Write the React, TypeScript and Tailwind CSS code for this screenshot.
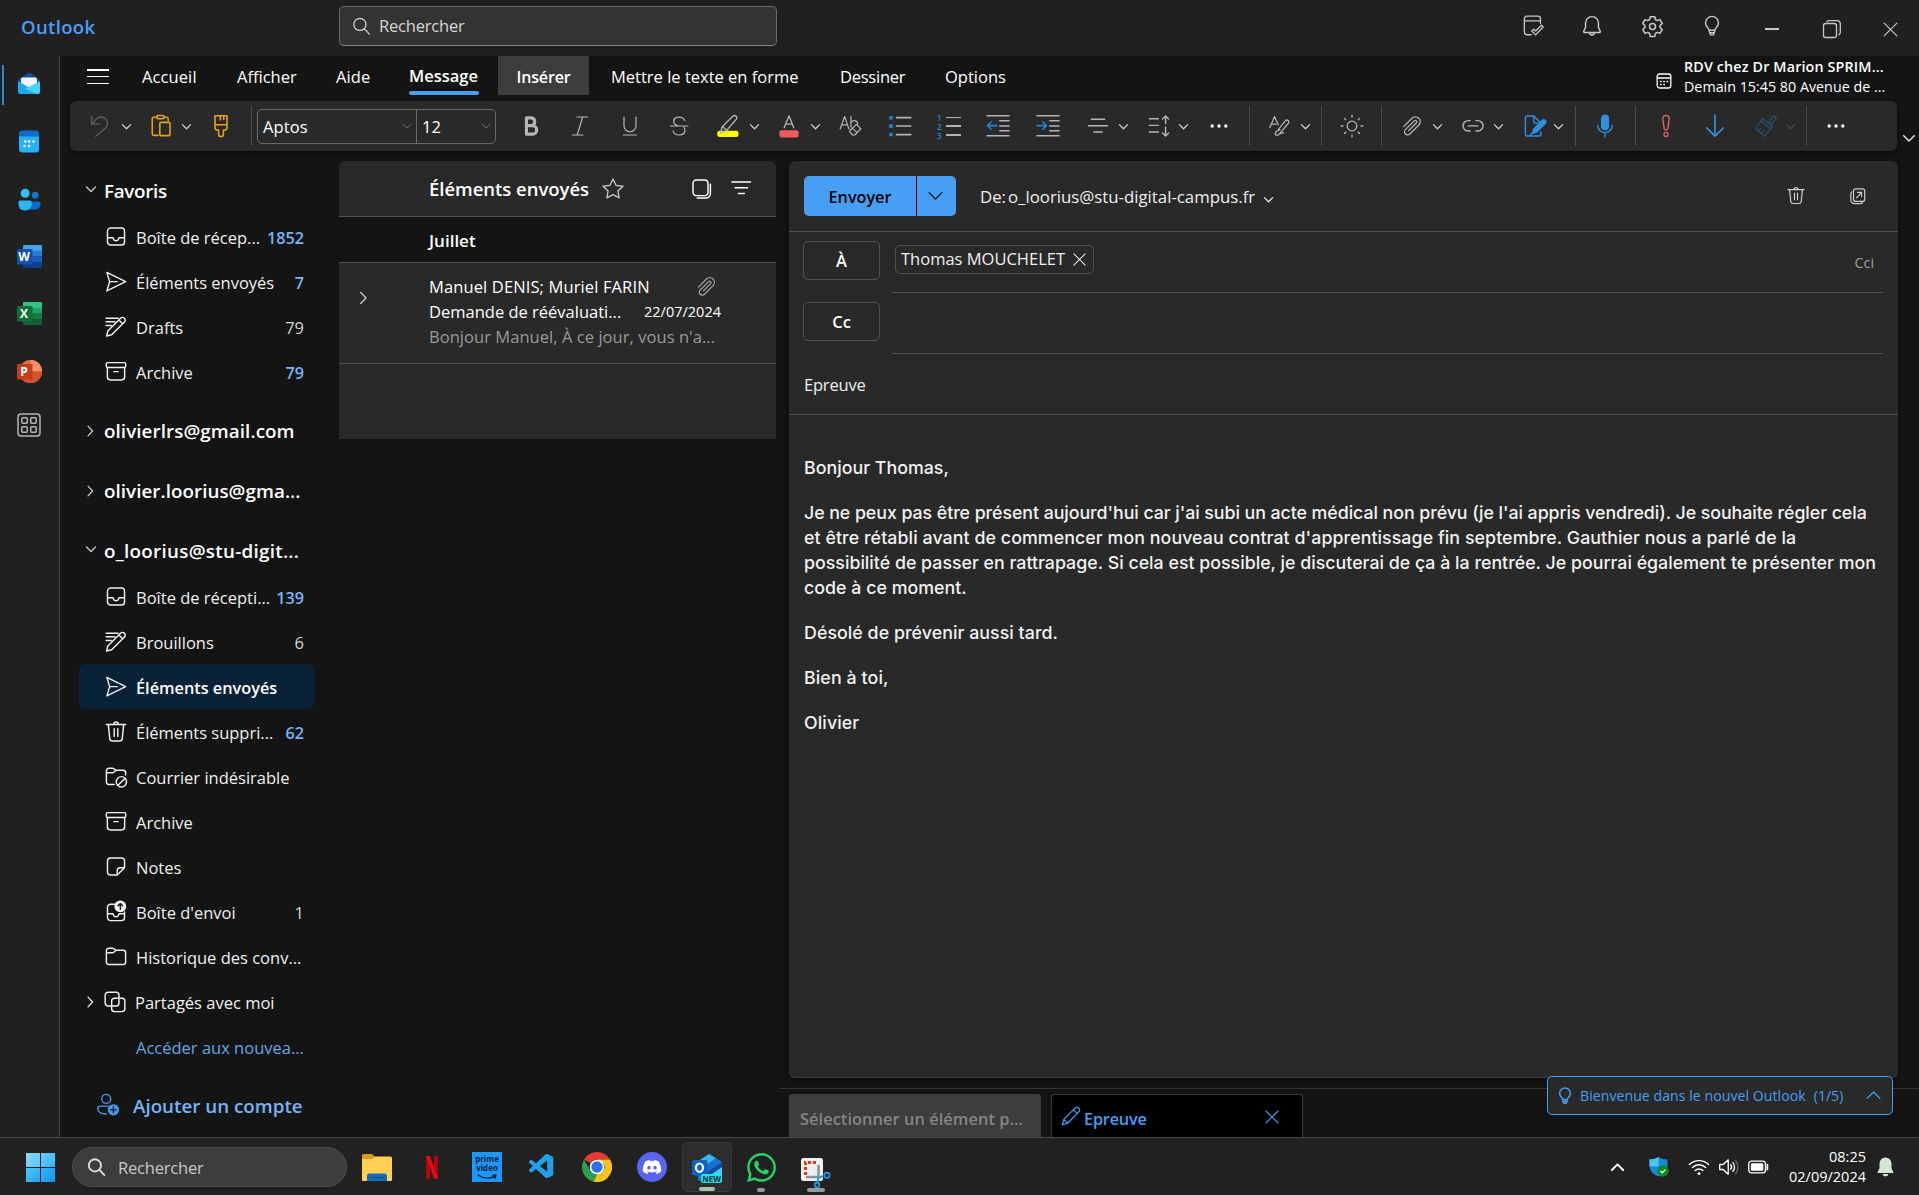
import type { ReactNode } from "react";
import { FaDiscord, FaWhatsapp } from "react-icons/fa";
import { VscVscode } from "react-icons/vsc";

type IconProps = { className?: string; children: ReactNode; box?: string; sw?: number };

function Icon({ className = "size-6", children, box = "0 0 20 20", sw = 1 }: IconProps) {
  return (
    <svg viewBox={box} fill="none" stroke="currentColor" strokeWidth={sw} strokeLinecap="round" strokeLinejoin="round" className={`shrink-0 ${className}`}>
      {children}
    </svg>
  );
}

const ChevDown = ({ className = "size-3", sw = 1.3 }: { className?: string; sw?: number }) => (
  <Icon box="0 0 12 12" sw={sw} className={className}><path d="M1.5 4 6 8.5 10.5 4" /></Icon>
);
const ChevRight = ({ className = "size-3" }: { className?: string }) => (
  <Icon box="0 0 12 12" sw={1.2} className={className}><path d="M4 1.2 8.6 6 4 10.8" /></Icon>
);
const ChevUp = ({ className = "size-3", sw = 1.2 }: { className?: string; sw?: number }) => (
  <Icon box="0 0 12 12" sw={sw} className={className}><path d="M1.5 8 6 3.5 10.5 8" /></Icon>
);
const Close = ({ className = "size-4" }: { className?: string }) => (
  <Icon box="0 0 16 16" sw={1.1} className={className}><path d="M2 2 14 14M14 2 2 14" /></Icon>
);
const SearchIcon = ({ className, sw = 1.2 }: { className?: string; sw?: number }) => (
  <Icon className={className} sw={sw}><circle cx="8.5" cy="8" r="5.8" /><path d="m12.8 12.3 4.7 5" /></Icon>
);
const Bulb = ({ className = "size-6", sw = 1.2 }: { className?: string; sw?: number }) => (
  <Icon className={className} sw={sw}>
    <path d="M10 2a5.4 5.4 0 0 0-5.4 5.3c0 1.9.9 3.300 2.300 4.700.4.4.5.8.6 1.200l.7 3c.2.9.7 1.400 1.500 1.400h.6c.8 0 1.300-.5 1.500-1.400l.7-3c.1-.4.2-.8.6-1.200 1.400-1.400 2.300-2.800 2.300-4.700A5.400 5.400 0 0 0 10 2ZM7.600 13.600h4.800M8 15.600h4" />
  </Icon>
);
const Inbox = () => (
  <Icon className="size-6" sw={1.2}><rect x="2.9" y="2.5" width="14.200" height="14.200" rx="2.600" /><path d="M3 10.600h4.200c.4 0 .5.3.6.7.2 1 1 1.800 2.200 1.800s2-.8 2.200-1.800c.1-.4.2-.7.6-.7H17" /></Icon>
);
const Send = () => (
  <Icon className="size-6" sw={1.200}><path d="M2.400 2 18 9.700 2.400 17.400 4.700 9.700ZM4.700 9.700H11" /></Icon>
);
const Drafts = () => (
  <Icon className="size-6" sw={1.200}><path d="M1.800 2.700h10M1.800 5.700h7.200M1.800 8.700H6M2.200 17.500l1-4.200L13.800 2.700a2.200 2.200 0 0 1 3.200 3.200L6.400 16.500ZM12.400 4.100l3.200 3.200" /></Icon>
);
const Archive = () => (
  <Icon className="size-6" sw={1.200}><rect x="1.900" y="2.200" width="16.200" height="4" rx="1.100" /><path d="M2.800 6.400v7.600a2.600 2.600 0 0 0 2.600 2.600h9.200a2.600 2.600 0 0 0 2.600-2.600V6.400M8.200 9.700h3.600" /></Icon>
);
const Trash = ({ className = "size-6" }: { className?: string }) => (
  <Icon className={className} sw={1.200}><path d="M2 3.700h16M8 3.700a2 2 0 0 1 4 0M3.600 3.900l1.200 11.600a2.200 2.200 0 0 0 2.200 2h6a2.200 2.200 0 0 0 2.200-2L16.400 3.900M8.500 7.200v6.500M11.500 7.200v6.500" /></Icon>
);
const folderTop = "M2 6.500h5.200c.5 0 .8-.2 1.200-.600L10 4.300M2 4.700a2 2 0 0 1 2-2h3c.5 0 1 .2 1.300.500L9.800 4.300H16a2 2 0 0 1 2 2";
const Folder = () => (
  <Icon className="size-6" sw={1.200}><path d={folderTop} /><path d="M2 4.700v9.500a2 2 0 0 0 2 2h12a2 2 0 0 0 2-2v-8" /></Icon>
);
const Junk = () => (
  <Icon className="size-6" sw={1.200}><path d={folderTop} /><path d="M2 4.700v9.500a2 2 0 0 0 2 2h4.500M18 6.300v2" /><circle cx="14.500" cy="14" r="4.300" /><path d="m11.700 16.800 5.700-5.600" /></Icon>
);
const Note = () => (
  <Icon className="size-6" sw={1.200}><path d="M17.100 10.600V5.100a2.600 2.600 0 0 0-2.600-2.600h-9a2.600 2.600 0 0 0-2.600 2.600v9a2.600 2.600 0 0 0 2.600 2.600H11ZM11 16.600v-3.500A2.500 2.500 0 0 1 13.500 10.600H17" /></Icon>
);
const Outbox = () => (
  <Icon className="size-6" sw={1.200}>
    <path d="M9.500 3.500h-4a2.600 2.600 0 0 0-2.600 2.600v8.500a2.600 2.600 0 0 0 2.600 2.600h9a2.600 2.600 0 0 0 2.600-2.600V10M3 11.500h4.200c.4 0 .5.3.6.7.2 1 1 1.800 2.200 1.800s2-.8 2.200-1.800c.1-.4.2-.7.6-.7H17" />
    <circle cx="13.600" cy="5.300" r="4.900" fill="#fff" stroke="none" /><path d="M13.600 7.800V3M11.700 4.800l1.900-1.900 1.900 1.900" stroke="#141414" />
  </Icon>
);
const Shared = () => (
  <Icon className="size-6" sw={1.200}><rect x="1.800" y="1.800" width="11.500" height="11.500" rx="2.400" /><rect x="7.200" y="6.800" width="11" height="11.200" rx="2.400" /></Icon>
);
const Clip = ({ className = "size-6" }: { className?: string }) => (
  <Icon className={className} sw={1.050}><path d="m3 10.500 7-7a4 4 0 0 1 5.700 5.700l-7.500 7.500a2.600 2.600 0 0 1-3.700-3.700l7.300-7.300a1.200 1.200 0 0 1 1.800 1.800L7.300 13.800" /></Icon>
);
const Dots = () => (
  <svg viewBox="0 0 18 4" className="h-1 w-[18px] shrink-0" fill="currentColor"><circle cx="2.200" cy="2" r="1.700" /><circle cx="9" cy="2" r="1.700" /><circle cx="15.800" cy="2" r="1.700" /></svg>
);
const Pencil = ({ className = "size-6" }: { className?: string }) => (
  <Icon className={className} sw={1.100}><path d="m2.200 17.800 1.200-4.700L13.700 2.900a2.400 2.400 0 0 1 3.400 3.400L6.900 16.600ZM12.200 4.400l3.400 3.400M3.400 13.100l3.500 3.500" /></Icon>
);

function Cell({ c, children }: { c: string; children: ReactNode }) {
  return <div className={`${c} flex h-full shrink-0 items-center justify-center`}>{children}</div>;
}
const Sep = ({ c }: { c: string }) => <div className={`${c} h-10 w-px shrink-0 bg-[#4a4a4a]`} />;

/* ---------- Title bar ---------- */
function TitleBar() {
  return (
    <header className="flex h-14 shrink-0 bg-[#202020] text-[#c8c8c8]">
      <div className="flex h-[53px] w-[339px] items-center pl-[21px] text-[18.500px] font-semibold tracking-[0.350px] text-[#479ef5]">Outlook</div>
      <div className="mt-1.5 flex h-10 w-[438px] items-center rounded-[5px] border border-[#6a6a6a] border-b-[#8a8a8a] bg-[#333] pl-[11px] tracking-[-0.200px] text-[#d6d6d6]">
        <SearchIcon className="size-[21px]" />
        <span className="ml-[7px] pt-px">Rechercher</span>
      </div>
      <div className="ml-auto flex">
        <div className="flex h-[52px] items-center">
          <Cell c="w-[58px]">
            <Icon className="size-6" sw={1.100}><path d="M8.500 17.300H5a2.200 2.200 0 0 1-2.200-2.200V4A2.200 2.200 0 0 1 5 1.800h9A2.200 2.200 0 0 1 16.200 4v4M2.800 5.800h13.400" /><path d="m9 14.200 1.600-1.600 1.600 1.600 4.800-4.900 1.500 1.500-6.300 6.600Z" /></Icon>
          </Cell>
          <Cell c="w-[60px]">
            <Icon className="size-6" sw={1.200}><path d="M10 2.200a5.400 5.400 0 0 0-5.400 5.400v3.600l-1.500 3.300c-.2.500.1.900.6.900h12.600c.5 0 .8-.4.6-.9l-1.500-3.300V7.600A5.400 5.400 0 0 0 10 2.200ZM8 15.500a2 2 0 0 0 4 0" /></Icon>
          </Cell>
          <Cell c="w-[60px]">
            <Icon className="size-[25px]" sw={1.200}><path d="M8.200 2.100h3.600l.5 2.300 1.500.9 2.200-.8 1.800 3.100-1.700 1.500v1.800l1.700 1.500-1.800 3.100-2.200-.8-1.500.9-.5 2.300H8.200l-.5-2.300-1.500-.9-2.200.8-1.800-3.100 1.700-1.500V9.100L2.200 7.600 4 4.500l2.200.8 1.500-.9Z" /><circle cx="10" cy="10" r="2.400" /></Icon>
          </Cell>
          <Cell c="w-[60px]"><Bulb /></Cell>
        </div>
        <div className="flex h-[58px] items-center">
          <Cell c="w-[60px]"><div className="h-0.5 w-3.5 bg-[#c8c8c8]" /></Cell>
          <Cell c="w-[60px]"><Icon className="size-5" sw={1.300}><rect x="1.500" y="4.500" width="13" height="14" rx="2.200" /><path d="M5 2.500Q5.800 1.600 7 1.600h8a3.300 3.300 0 0 1 3.300 3.300v8.400q0 1.500-1.300 2.500" /></Icon></Cell>
          <Cell c="w-[57px]"><Close className="size-[17px]" /></Cell>
        </div>
      </div>
    </header>
  );
}

/* ---------- App rail ---------- */
function OfficeTile({ letter, kind }: { letter: string; kind: "word" | "excel" | "ppt" }) {
  const c = {
    word: ["#41a5ee", "#2b7cd3", "#185abd", "#103f91", "#1150b0"],
    excel: ["#33c481", "#21a366", "#107c41", "#185c37", "#0f7038"],
    ppt: ["#ff8f6b", "#ed6c47", "#d35230", "#d35230", "#c43e1c"],
  }[kind];
  return (
    <div className="relative h-[23px] w-[25px]">
      <svg viewBox="0 0 25 23" className="size-full">
        {kind === "ppt" ? (
          <><circle cx="13.500" cy="11.500" r="11.500" fill={c[1]} /><path d="M13.500 0A11.500 11.500 0 0 1 25 11.500H13.500Z" fill={c[0]} /><path d="M2 11.500h23a11.500 11.500 0 0 1-23 0Z" fill={c[2]} /></>
        ) : (
          <><path d="M7 0h17a1 1 0 0 1 1 1v5H6V1a1 1 0 0 1 1-1Z" fill={c[0]} /><path d="M6 5.800h19v5.800H6Z" fill={c[1]} /><path d="M6 11.500h19v5.800H6Z" fill={c[2]} /><path d="M6 17.200h19V22a1 1 0 0 1-1 1H7a1 1 0 0 1-1-1Z" fill={c[3]} /></>
        )}
        <rect x="0" y="4" width="15.500" height="15.500" rx="1.300" fill={c[4]} />
      </svg>
      <span className="absolute top-1 left-0 flex size-[15px] items-center justify-center text-[12px] leading-none font-bold text-white">{letter}</span>
    </div>
  );
}

function Rail() {
  return (
    <nav className="flex w-[60px] shrink-0 flex-col items-center border-r border-[#414141] bg-[#202020] pr-px">
      <div className="relative flex h-[54px] w-full items-center justify-center">
        <div className="absolute top-[9px] left-0.5 h-10 w-0.5 bg-[#2f86d6]" />
        <svg viewBox="0 0 24 24" className="size-[24px]">
          <path d="M1 9 11 1.800q1-.7 2 0L23 9v6H1Z" fill="#0f4fa8" /><path d="M4 8q0-1.500 1.500-1.500h13Q20 6.500 20 8v8H4Z" fill="#f3f6fd" />
          <path d="M1 10.500 12 17 1 21Z" fill="#1783de" /><path d="M23 10.500 7 19l-5 3q1 1 2 1h16q3 0 3-3Z" fill="#3ccbf4" /><path d="m1 10 13 8 6 5H4q-3 0-3-3Z" fill="#22a9ec" /><path d="M23 10.500 8 18l12 5q3 0 3-3Z" fill="#45d5fa" />
        </svg>
      </div>
      <div className="flex h-[62px] items-center">
        <svg viewBox="0 0 20 23" className="h-[23px] w-5"><rect y="1" width="20" height="21.500" rx="3.500" fill="#29b0f5" /><path d="M0 6.500V4Q0 .500 3.500.500h13Q20 .500 20 4v2.500Z" fill="#0f6cce" /><g fill="#fff"><circle cx="6.300" cy="11.500" r="1.200" /><circle cx="10" cy="11.500" r="1.200" /><circle cx="14.500" cy="11.500" r="1.200" /><circle cx="5.500" cy="16" r="1.200" /><circle cx="10" cy="16" r="1.200" /></g></svg>
      </div>
      <div className="flex h-[54px] items-center">
        <svg viewBox="0 0 24 24" className="size-[23px]"><circle cx="18" cy="7.500" r="3.500" fill="#0f78d4" /><path d="M12 14h9.500q2 0 2 2.500 0 6-6 6H12Z" fill="#0f6cc8" /><circle cx="7.500" cy="5.500" r="4.700" fill="#35bdf8" /><path d="M2.500 13h9.500q2.500 0 2.500 2.500 0 8-7.200 8T.500 15.500Q.500 13 2.500 13Z" fill="#2bb6f6" /></svg>
      </div>
      <div className="flex h-[61px] items-center"><OfficeTile letter="W" kind="word" /></div>
      <div className="flex h-[53px] items-center"><OfficeTile letter="X" kind="excel" /></div>
      <div className="flex h-[63px] items-center"><OfficeTile letter="P" kind="ppt" /></div>
      <div className="mt-[10px] text-[#b5b5b5]">
        <Icon box="0 0 24 24" sw={1.500} className="size-6"><rect x="1" y="1" width="22" height="22" rx="3" /><rect x="4.800" y="4.800" width="5.500" height="5.500" rx="1" /><rect x="13.700" y="4.800" width="5.500" height="5.500" rx="1" /><rect x="4.800" y="13.700" width="5.500" height="5.500" rx="1" /><rect x="13.700" y="13.700" width="5.500" height="5.500" rx="1" /></Icon>
      </div>
    </nav>
  );
}

/* ---------- Menu and ribbon ---------- */
function MenuTabs() {
  return (
    <div className="flex h-[45px] text-white">
      <div className="flex h-[41px] items-center pl-[27px]">
        <div className="flex h-[15px] w-[22px] flex-col justify-between"><i className="h-[1.500px] bg-white" /><i className="h-[1.500px] bg-white" /><i className="h-[1.500px] bg-white" /></div>
      </div>
      <div className="flex h-10 items-center pt-0.5">
        <span className="ml-[33px] w-[95px] tracking-[0.100px]">Accueil</span>
        <span className="w-[99px]">Afficher</span>
        <span className="w-[73px] tracking-[0.100px]">Aide</span>
      </div>
      <div className="flex h-[39px] w-[89px] flex-col items-start justify-end text-[16.500px] font-semibold">
        <span className="pb-[3px] leading-6">Message</span>
        <i className="h-1 w-[70px] rounded-[2px] bg-[#479ef5]" />
      </div>
      <div className="flex h-[39px] w-[91px] items-center justify-center bg-[#3d3d3d] pt-0.5 text-[16px] font-semibold tracking-[-0.150px]">Insérer</div>
      <div className="flex h-10 items-center pt-0.5">
        <span className="ml-[22px] w-[229px]">Mettre le texte en forme</span>
        <span className="w-[105px] tracking-[-0.250px]">Dessiner</span>
        <span>Options</span>
      </div>
      <div className="ml-auto flex w-[263px] items-center text-[14.300px] leading-5">
        <Icon box="0 0 16 16" sw={1.300} className="mt-1 size-4"><rect x="1.200" y="1" width="13.600" height="14" rx="2.600" /><path d="M1.200 5h13.600M4.500 8.500h.6M7.800 8.500h.6M11 8.500h.6M4.500 11.500h.6M7.800 11.500h.6" /></Icon>
        <div className="ml-[12px] mb-2 pt-1 whitespace-nowrap">
          <p className="font-semibold tracking-[0.150px]">RDV chez Dr Marion SPRIM...</p>
          <p>Demain 15:45 80 Avenue de ...</p>
        </div>
      </div>
    </div>
  );
}

function Ribbon() {
  const chev = <ChevDown className="size-[11px] text-[#d0d0d0]" sw={1.400} />;
  return (
    <div className="flex h-[50px]">
      <div className="ml-2.5 flex w-[1827px] items-center rounded-md bg-[#292929] text-[#b5b5b5] shadow-[0_2px_4px_rgba(0,0,0,0.5)]">
        <Cell c="ml-4 w-7"><Icon className="size-6 text-[#5f5f5f]" sw={1.100}><path d="M3 2v6.500h6.500M3.200 8.300 7 4.200a5.400 5.400 0 0 1 8.500.8 6 6 0 0 1-.8 6.500L6.500 18.500" /></Icon></Cell>
        <Cell c="w-6">{chev}</Cell>
        <Cell c="ml-2 w-[30px]"><Icon className="size-6 text-[#e8a317]" sw={1.300}><path d="M7.500 17.800H4a1.300 1.300 0 0 1-1.300-1.300V4A1.300 1.300 0 0 1 4 2.700h2.500M12.500 2.700H15A1.300 1.300 0 0 1 16 4v1.500" /><rect x="6.500" y="1.300" width="6" height="2.700" rx="1" /><rect x="9" y="7" width="8.500" height="11" rx="1" /></Icon></Cell>
        <Cell c="w-5">{chev}</Cell>
        <Cell c="ml-[9px] w-[31px]"><Icon className="size-6 text-[#e8a317]" sw={1.300}><path d="M5 1.500h10v10a1.800 1.800 0 0 1-1.800 1.800H12v3.500a2 2 0 0 1-4 0v-3.500H6.800A1.800 1.800 0 0 1 5 11.500ZM5 9h10M9.500 1.500V5M12.300 1.500v3" /></Icon></Cell>
        <Sep c="ml-[15px]" />
        <div className="ml-[5px] flex h-[35px] w-[239px] items-center rounded-[5px] border border-[#6a6a6a] text-white">
          <div className="flex h-full w-[159px] items-center justify-between border-r border-[#6a6a6a] pr-1 pl-[5px]"><span className="pt-0.5 tracking-[0.100px]">Aptos</span><ChevDown className="size-2.5 text-[#777]" sw={1.100} /></div>
          <div className="flex flex-1 items-center justify-between pr-1 pl-[5px]"><span className="pt-0.5">12</span><ChevDown className="size-2.5 text-[#777]" sw={1.100} /></div>
        </div>
        <Cell c="ml-5 w-[30px]"><Icon className="size-6" sw={2.600}><path d="M6.200 3.200v13.600M6.200 3.200h4.200a3.300 3.300 0 0 1 0 6.500H6.200h5a3.500 3.500 0 0 1 0 7.100h-5" /></Icon></Cell>
        <Cell c="ml-[19px] w-[30px]"><Icon className="size-6"><path d="M7.500 2.500h9M3.500 17.500h9M12.200 2.500l-4.500 15" /></Icon></Cell>
        <Cell c="ml-5 w-[30px]"><Icon className="size-6"><path d="M5 2.500v7.300a5 5 0 0 0 10 0V2.500M4.500 17.500h11" /></Icon></Cell>
        <Cell c="ml-[19px] w-[30px]"><Icon className="size-6"><path d="M14.800 5.500C14 3.500 12.300 2.600 10.200 2.600 7.500 2.600 5.500 4 5.500 6.300c0 2 1.300 2.900 4.500 3.700M5 14.300c.7 2.100 2.600 3.200 5 3.200 2.900 0 5-1.400 5-3.900a3.500 3.500 0 0 0-1-2.600M2.800 10h14.600" /></Icon></Cell>
        <Cell c="ml-[19px] w-[30px]"><Icon className="size-6" sw={1.100}><path d="M2.500 14h14.300a2 2 0 0 1 2 2v1.300a1.800 1.800 0 0 1-1.800 1.800H3a2 2 0 0 1-2-2v-1a2 2 0 0 1 1.500-2.100Z" fill="#ff0" stroke="none" /><path d="m3.800 15.800 1-4.300a3 3 0 0 1 .8-1.300L14 1.900a1.900 1.900 0 0 1 2.700 2.700l-7.800 9a3 3 0 0 1-1.500.9ZM5.500 10.400 8.800 13.500" /></Icon></Cell>
        <Cell c="w-[22px]">{chev}</Cell>
        <Cell c="ml-[9px] w-[30px]"><Icon className="size-6" sw={1.100}><rect x="2" y="13.500" width="16" height="6" rx="1.500" fill="#ee5b5b" stroke="none" /><path d="m6 11.500 4-10 4 10M7.300 8.500h5.400" /></Icon></Cell>
        <Cell c="w-[22px]">{chev}</Cell>
        <Cell c="ml-2.5 w-[30px]"><Icon className="size-6"><path d="M1 12.500 4.700 2l3.600 10.500M2.300 9h5M10 2v9M10 7.500c.5-1.500 1.500-2 2.700-2 1.800 0 2.800 1 2.900 3M9.500 13.500l5-4.800 3.700 3.600-5 5.200h-1.800L9.300 15.300a1.200 1.200 0 0 1 .2-1.800ZM11.300 12l3.800 3.500" /></Icon></Cell>
        <Cell c="ml-[19px] w-[30px]"><Icon className="size-6" sw={1.300}><path d="M7 3h12M7 10h12M7 17.200h12" /><path d="M1 1.600h3v3H1ZM1 8.600h3v3H1ZM1 15.600h3v3H1Z" fill="#1f86d1" stroke="none" /></Icon></Cell>
        <Cell c="ml-[19px] w-[30px]">
          <div className="flex h-[27px] w-6 items-center gap-1">
            <div className="flex flex-col text-[8px] leading-[9px] font-semibold text-[#1f86d1]"><span>1</span><span>2</span><span>3</span></div>
            <div className="flex h-[19px] flex-1 flex-col justify-between"><i className="h-[1.500px] bg-[#b5b5b5]" /><i className="h-[1.500px] bg-[#b5b5b5]" /><i className="h-[1.500px] bg-[#b5b5b5]" /></div>
          </div>
        </Cell>
        <Cell c="ml-[19px] w-[30px]"><Icon className="size-6" sw={1.300}><path d="M.8 1.500h18.400M11.500 5.700h7.700M11.500 10h7.700M11.500 14h7.700M.8 18.200h18.400" /><path d="M9 9.700H1.300M4.300 6.700l-3 3 3 3" stroke="#1f86d1" /></Icon></Cell>
        <Cell c="ml-5 w-[30px]"><Icon className="size-6" sw={1.300}><path d="M.8 1.500h18.400M11.500 5.700h7.700M11.500 10h7.700M11.500 14h7.700M.8 18.200h18.400" /><path d="M1 9.700h7.700M5.700 6.700l3 3-3 3" stroke="#1f86d1" /></Icon></Cell>
        <Cell c="ml-5 w-[30px]"><Icon className="size-6" sw={1.200}><path d="M4.500 4.300h11M2 9.800h16M6.500 15h7" /></Icon></Cell>
        <Cell c="w-5">{chev}</Cell>
        <Cell c="ml-[11px] w-[30px]"><Icon className="size-6" sw={1.200}><path d="M2 4h7.500M2 9.500h7.500M2 15h7.500M15.500 8V1.800M13 4.200l2.500-2.500L18 4.200M15.500 11v7M13 15.800l2.500 2.500 2.500-2.500" /></Icon></Cell>
        <Cell c="w-[18px]">{chev}</Cell>
        <Cell c="ml-3 w-[30px] text-white"><Dots /></Cell>
        <Sep c="ml-[15px]" />
        <Cell c="ml-[15px] w-[30px]"><Icon className="size-6"><path d="m1.500 11.500 4-9.500 3 7M3 8.500h4M6 16.500c0-2 2.500-3 4-3.500M6 16.500c0 1.800 2.500 1.300 3.500 0l7.500-8.800a1.600 1.600 0 0 0-2.500-2L8.500 13M10 16.500l3-1" /></Icon></Cell>
        <Cell c="w-[20px]">{chev}</Cell>
        <Sep c="ml-[6px]" />
        <Cell c="ml-[15px] w-[30px]"><Icon className="size-6" sw={1.100}><circle cx="10" cy="10" r="4" /><path d="M10 1v1.500M10 17.500V19M1 10h1.500M17.500 10H19M3.800 3.800l1 1M15.200 15.200l1 1M16.200 3.800l-1 1M4.800 15.200l-1 1" /></Icon></Cell>
        <Sep c="ml-3.5" />
        <Cell c="ml-[15px] w-[30px]"><Clip /></Cell>
        <Cell c="w-5">{chev}</Cell>
        <Cell c="ml-[11px] w-[30px]"><Icon className="size-6" sw={1.200}><path d="M7.500 5.500H6a4.300 4.300 0 0 0 0 8.700h1.500M12.500 5.500H14a4.300 4.300 0 0 1 0 8.700h-1.500M6 9.900h8" /></Icon></Cell>
        <Cell c="w-[20px]">{chev}</Cell>
        <Cell c="ml-3 w-[30px]"><Icon className="size-6 text-[#2f8fe0]" sw={1.200}><path d="M8 15.500l-2.500 2.800H3.500A1.500 1.500 0 0 1 2 16.800V3.200a1.500 1.500 0 0 1 1.500-1.500H9l6 6V9M9 1.700v4.500a1.400 1.400 0 0 0 1.400 1.400H15M3.500 18.300h10a1.500 1.500 0 0 0 1.500-1.500V15" /><path d="m8 16 1-3.500 7-7a1.500 1.500 0 0 1 2.500 2.500l-7 7Z" fill="currentColor" /></Icon></Cell>
        <Cell c="w-[17px]">{chev}</Cell>
        <Sep c="ml-2" />
        <Cell c="ml-3.5 w-[30px]"><Icon className="size-6 text-[#2f8fe0]" sw={1.200}><rect x="7.200" y="1" width="5.600" height="12" rx="2.800" fill="currentColor" /><path d="M4 9.500a6 6 0 0 0 12 0M10 15.700v3.500" /></Icon></Cell>
        <Sep c="ml-[15px]" />
        <Cell c="ml-[15px] w-[30px]"><Icon className="size-6 text-[#dc5f63]" sw={1.200}><path d="M10 1.200c-1.800 0-3 1.300-2.700 3.200l1.200 7.800c.3 1.500 2.700 1.500 3 0l1.200-7.800C13 2.500 11.800 1.200 10 1.200Z" /><circle cx="10" cy="17" r="1.700" /></Icon></Cell>
        <Cell c="ml-[19px] w-[30px]"><Icon className="size-6 text-[#2f8fe0]" sw={1.400}><path d="M10 1v17.500M3 11.500l7 7 7-7" /></Icon></Cell>
        <Cell c="ml-5 w-[30px]"><Icon className="size-6 text-[#2a4d6e]" sw={1.200}><path d="m12.800 7.600 3.600-5.200a1.500 1.500 0 0 1 2.400 1.900l-4 4.800M8.300 3.700l7.900 6.600-1.500 2L6.700 5.800ZM6.700 5.800l-4.500 6.400 7.500 6.300 5-6.200M4.700 14l1.800-2M7.200 16.200l1.800-2.100" /></Icon></Cell>
        <Cell c="w-5"><ChevDown className="size-[11px] text-[#4c4c4c]" /></Cell>
        <Sep c="ml-1.5" />
        <Cell c="ml-3.5 w-[30px] text-white"><Dots /></Cell>
      </div>
      <div className="flex flex-1 items-end justify-center pb-1.5 pl-px text-[#ddd]"><ChevDown className="size-3.5" /></div>
    </div>
  );
}

/* ---------- Folder pane ---------- */
type Row = { icon: ReactNode; label: string; count?: string; strong?: boolean; selected?: boolean };
const favorites: Row[] = [
  { icon: <Inbox />, label: "Boîte de récep...", count: "1852", strong: true },
  { icon: <Send />, label: "Éléments envoyés", count: "7", strong: true },
  { icon: <Drafts />, label: "Drafts", count: "79" },
  { icon: <Archive />, label: "Archive", count: "79", strong: true },
];
const folders: Row[] = [
  { icon: <Inbox />, label: "Boîte de récepti...", count: "139", strong: true },
  { icon: <Drafts />, label: "Brouillons", count: "6" },
  { icon: <Send />, label: "Éléments envoyés", selected: true },
  { icon: <Trash />, label: "Éléments suppri...", count: "62", strong: true },
  { icon: <Junk />, label: "Courrier indésirable" },
  { icon: <Archive />, label: "Archive" },
  { icon: <Note />, label: "Notes" },
  { icon: <Outbox />, label: "Boîte d'envoi", count: "1" },
  { icon: <Folder />, label: "Historique des conv..." },
];

function FolderRow({ icon, label, count, strong, selected }: Row) {
  return (
    <div className={`ml-[19px] flex h-[45px] w-[235px] items-center rounded-md pr-2.5 pl-[25px] ${selected ? "bg-[#0a2237]" : ""}`}>
      {icon}
      <span className={`ml-2 pt-[3px] whitespace-nowrap ${selected ? "text-[16.300px] font-semibold text-white" : ""}`}>{label}</span>
      {count && <span className={`ml-auto pt-[3px] ${strong ? "text-[16.200px] font-semibold text-[#75b6f7]" : "text-[#d6d6d6]"}`}>{count}</span>}
    </div>
  );
}

function Account({ label, open, c, t }: { label: string; open?: boolean; c: string; t: string }) {
  return (
    <div className={`flex items-center pl-6 text-[18.800px] font-semibold ${c}`}>
      <span className="flex w-5 text-[#d0d0d0]">{open ? <ChevDown className="mb-1 ml-px size-3" sw={1.200} /> : <ChevRight className="size-3" />}</span>
      <span className={`whitespace-nowrap text-white ${t}`}>{label}</span>
    </div>
  );
}

function FolderPane() {
  return (
    <aside className="flex w-[279px] shrink-0 flex-col pt-[17px] text-[#f0f0f0]">
      <Account label="Favoris" open c="h-[46px]" t="tracking-[-0.300px]" />
      {favorites.map((f) => <FolderRow key={f.label} {...f} />)}
      <Account label="olivierlrs@gmail.com" c="h-[74px]" t="tracking-[0.080px]" />
      <Account label="olivier.loorius@gma..." c="h-[46px]" t="tracking-[0.050px]" />
      <Account label="o_loorius@stu-digit..." open c="mt-3.5 h-[46px]" t="tracking-[0.290px]" />
      {folders.map((f) => <FolderRow key={f.label} {...f} />)}
      <div className="flex h-[45px] items-center pl-6"><ChevRight className="size-3" /><span className="ml-[7px]"><Shared /></span><span className="ml-2 pt-[3px]">Partagés avec moi</span></div>
      <div className="flex h-[45px] items-center pt-[3px] pl-[76px] text-[#67a6e6]">Accéder aux nouvea...</div>
      <div className="flex h-[68px] items-center pt-1 pl-[36px] text-[18.800px] font-semibold text-[#75b6f7]">
        <Icon className="size-6 text-[#479ef5]" sw={1.100}><circle cx="8.500" cy="4.900" r="3.700" /><path d="M8.500 17.500c-4.500 0-7-1.500-7-4.500 0-1.100.8-2 2-2H10" /><circle cx="14.500" cy="14" r="4.700" fill="currentColor" stroke="none" /><path d="M14.500 11.500v5M12 14h5" stroke="#141414" /></Icon>
        <span className="ml-[13px] pt-0.5">Ajouter un compte</span>
      </div>
    </aside>
  );
}

/* ---------- Message list ---------- */
function MessageList() {
  return (
    <section className="mt-2.5 flex h-[278px] w-[437px] shrink-0 flex-col overflow-hidden rounded-t-md bg-[#292929] text-white">
      <div className="flex h-14 items-center border-b border-[#525252] pl-[90px]">
        <h2 className="w-[172px] text-[18.500px] font-semibold tracking-[-0.030px] whitespace-nowrap">Éléments envoyés</h2>
        <Icon className="size-6 text-[#c8c8c8]" sw={1.100}><path d="m10 1.700 2.500 5.200 5.800.8-4.200 4 1 5.700-5.100-2.700-5.100 2.700 1-5.700-4.200-4 5.800-.8Z" /></Icon>
        <Icon className="ml-[65px] size-6" sw={1.200}><rect x="2.500" y="2.500" width="12.500" height="13" rx="2.800" /><path d="M17 6v7.800a3.700 3.700 0 0 1-3.700 3.700H6" /></Icon>
        <Icon className="ml-[15px] size-6" sw={1.200}><path d="M2.500 4.200h15.500M5 9h10.500M7.800 13.700h5" /></Icon>
      </div>
      <div className="flex h-[46px] items-center border-b border-[#525252] bg-[#141414] pt-0.5 pl-[90px] text-[17px] font-semibold">Juillet</div>
      <div className="flex h-[101px] border-b border-[#525252] pt-[11px]">
        <div className="flex w-[90px] pt-[17px] pl-[17px] text-[#c8c8c8]"><ChevRight className="size-[14px]" /></div>
        <div className="w-[292px] leading-[25px] whitespace-nowrap">
          <div className="flex h-[25px] items-center justify-between pr-[3px]"><span className="tracking-[0.120px]">Manuel DENIS; Muriel FARIN</span><Clip className="size-[23px] text-[#a5a5a5]" /></div>
          <div className="flex h-[25px] items-center justify-between"><span>Demande de réévaluati...</span><span className="text-[14.500px]">22/07/2024</span></div>
          <div className="tracking-[0.050px] text-[#9a9a9a]">Bonjour Manuel, À ce jour, vous n'a...</div>
        </div>
      </div>
    </section>
  );
}

/* ---------- Compose ---------- */
function Recipient({ label, children, extra }: { label: string; children?: ReactNode; extra?: string }) {
  return (
    <div className="flex h-[61px] pt-[9px] pl-3.5">
      <div className="flex h-[39px] w-[77px] items-center justify-center rounded-[5px] border border-[#525252] pt-0.5 text-[16.500px] font-semibold text-white">{label}</div>
      <div className="ml-3 flex h-[52px] w-[991px] border-b border-[#525252] pl-[3px]">
        {children}
        {extra && <span className="mt-[11px] mr-[9px] ml-auto text-[14.300px] text-[#a0a0a0]">{extra}</span>}
      </div>
    </div>
  );
}

function Compose() {
  return (
    <section className="ml-[13px] flex h-[917px] w-[1109px] flex-col rounded-md border-b border-[#3d3d3d] bg-[#292929] text-[#f0f0f0] shadow-[0_2px_4px_rgba(0,0,0,0.5)]">
      <div className="flex h-[71px] shrink-0 items-center border-b border-[#525252] pl-[15px]">
        <div className="flex h-10 overflow-hidden rounded-[5px] bg-[#479ef5] text-black">
          <span className="flex w-[113px] items-center justify-center border-r border-black pt-0.5 text-[16.200px] font-semibold">Envoyer</span>
          <span className="flex w-[39px] items-center justify-center"><ChevDown className="mb-0.5 ml-[-2px] size-[17px]" sw={0.800} /></span>
        </div>
        <span className="ml-6 pt-px text-[16.800px]">De:<span className="ml-0.5">o_loorius@stu-digital-campus.fr</span></span>
        <ChevDown className="mt-1.5 ml-2 size-[11px]" />
        <div className="mr-[31px] ml-auto flex items-center gap-[43px] text-[#d0d0d0]">
          <Trash className="size-5" />
          <Icon className="size-[18px]" sw={1.300}><rect x="5" y="2" width="12.500" height="14" rx="2.500" /><path d="M3 5.500Q2 6.500 2 8v6.500A4.300 4.300 0 0 0 6.300 18.500H12Q14 18.500 15 17.500M8.500 12l5.500-6M9.500 6H14v4.500" /></Icon>
        </div>
      </div>
      <Recipient label="À" extra="Cci">
        <div className="mt-1 flex h-[29px] w-[199px] items-center rounded-[5px] border border-[#525252] pl-[5px]">
          <span className="whitespace-nowrap">Thomas MOUCHELET</span><Close className="mb-px ml-[7px] size-[15px]" />
        </div>
      </Recipient>
      <Recipient label="Cc" />
      <div className="flex h-[61px] shrink-0 items-center border-b border-[#525252] pt-[3px] pl-[15px] tracking-[-0.200px]">Epreuve</div>
      <div className="flex flex-col gap-5 pt-10 pl-[15px] font-[Inter] text-[17.800px] leading-[25px] font-medium tracking-[0.020px] whitespace-nowrap text-[#f2f2f2]">
        <p>Bonjour Thomas,</p>
        <p>
          <span className="tracking-[-0.060px]">Je ne peux pas être présent aujourd'hui car j'ai subi un acte médical non prévu (je l'ai appris vendredi). Je souhaite régler cela</span><br />
          <span className="tracking-[0.070px]">et être rétabli avant de commencer mon nouveau contrat d'apprentissage fin septembre. Gauthier nous a parlé de la</span><br />
          <span className="tracking-[0.005px]">possibilité de passer en rattrapage. Si cela est possible, je discuterai de ça à la rentrée. Je pourrai également te présenter mon</span><br />
          code à ce moment.
        </p>
        <p className="tracking-[0.050px]">Désolé de prévenir aussi tard.</p>
        <p className="tracking-[0.100px]">Bien à toi,</p>
        <p className="tracking-[0.100px]">Olivier</p>
      </div>
    </section>
  );
}

function DraftTabs() {
  return (
    <div className="mt-[10px] ml-[3px] flex flex-1 items-end border-t border-[#333] pl-2.5 text-[16.300px] font-semibold whitespace-nowrap">
      <div className="flex h-[43px] w-[252px] items-center rounded-t-[3px] bg-[#3d3d3d] pt-2 pl-[11px] text-[16.400px] tracking-[0.050px] text-[#858585]">Sélectionner un élément p...</div>
      <div className="ml-2.5 flex h-[43px] w-[252px] items-center rounded-t-[3px] border border-b-0 border-[#3d3d3d] bg-black pl-2 text-[#479ef5]">
        <Pencil className="size-[22px]" />
        <span className="ml-[2px] pt-1.5 tracking-[-0.200px]">Epreuve</span>
        <Close className="mt-px mr-[22px] ml-auto size-4" />
      </div>
    </div>
  );
}

/* ---------- Taskbar ---------- */
function Chrome() {
  return (
    <svg viewBox="0 0 30 30" className="size-[30px]">
      <path d="M15 0a15 15 0 0 1 13 7.500H15A7.500 7.500 0 0 0 8.500 11.200L2 7.500A15 15 0 0 1 15 0Z" fill="#e33b2e" />
      <path d="M2 7.500 8.500 18.700A7.500 7.500 0 0 0 15 22.500L11.500 29.600A15 15 0 0 1 2 7.500Z" fill="#2c9f4b" />
      <path d="M28 7.500A15 15 0 0 1 14 30l7.500-11.300a7.500 7.500 0 0 0 0-7.500L15 7.500Z" fill="#fcc31e" />
      <path d="m8.500 18.700 6.500 3.800L11.500 29.600 4 21Z" fill="#2c9f4b" />
      <path d="m15 22.500 6.500-3.800L15 30h-3.500Z" fill="#fcc31e" />
      <circle cx="15" cy="15" r="7.300" fill="#fff" /><circle cx="15" cy="15" r="5.700" fill="#2f74e6" />
    </svg>
  );
}

function OutlookApp() {
  return (
    <div className="relative size-[30px]">
      <svg viewBox="0 0 30 30" className="size-full">
        <path d="M6 9 17 2 30 10v17a2 2 0 0 1-2 2H8a2 2 0 0 1-2-2Z" fill="#1379d6" /><path d="M8 8 17 2l7 4.300L11 15Z" fill="#37b4f2" /><path d="m24 6.300 6 3.700L14 21v-7Z" fill="#1b6fd0" /><path d="M30 10v7L14 26v-5Z" fill="#0c4a9e" /><path d="M30 15v12a2 2 0 0 1-2 2H10Z" fill="#3fd0f5" />
        <rect y="8" width="15.500" height="15.500" rx="2" fill="#0f62c0" /><ellipse cx="7.500" cy="15.700" rx="3.500" ry="4.200" fill="none" stroke="#fff" strokeWidth="2.200" />
      </svg>
      <span className="absolute right-0 -bottom-px flex h-[9px] w-[21px] items-center justify-center rounded-[2px] bg-[#22e4e8] text-[8px] leading-none font-bold text-[#082a3a]">NEW</span>
    </div>
  );
}

function Taskbar() {
  return (
    <footer className="flex h-[58px] shrink-0 items-center border-t border-[#484848] bg-[#212121] pt-px text-white">
      <div className="ml-[26px] grid size-[29px] grid-cols-2 gap-px"><i className="bg-linear-to-br from-[#8fdcfb] to-[#55c3f5]" /><i className="bg-linear-to-br from-[#63cffa] to-[#30b7f3]" /><i className="bg-linear-to-br from-[#4cc5f8] to-[#1fa4f0]" /><i className="bg-linear-to-br from-[#30b8f7] to-[#1492ee]" /></div>
      <div className="ml-[17px] flex h-10 w-[275px] items-center rounded-full border border-[#4e4e4e] bg-[#3d3d3d] pl-[13px] tracking-[-0.200px] text-[#c8c8c8]">
        <SearchIcon className="size-[21px] text-[#ddd]" sw={1.800} /><span className="ml-[11px] pt-0.5">Rechercher</span>
      </div>
      <Cell c="ml-[10px] w-10">
        <svg viewBox="0 0 30 28" className="h-7 w-[30px]"><path d="M0 2.500A1.500 1.500 0 0 1 1.500 1H10l3 3v4H0Z" fill="#dc9c10" /><path d="M0 6h10l3-2.500h15.500A1.500 1.500 0 0 1 30 5v22a1 1 0 0 1-1 1H1a1 1 0 0 1-1-1Z" fill="#ffd052" /><path d="M5 28v-5a2.500 2.500 0 0 1 2.500-2.500h15A2.500 2.500 0 0 1 25 23v5Z" fill="#0f6cbd" /><path d="M9 24.500h12" stroke="#0a4a8a" strokeWidth="1.200" /></svg>
      </Cell>
      <Cell c="ml-[15px] w-10"><svg viewBox="0 0 12 23" className="h-[23px] w-3"><path d="M0 0h4v22.500L0 23ZM8 0h4v23l-4-.5Z" fill="#b1060f" /><path d="M0 0h4l8 23-4-.5Z" fill="#e50914" /></svg></Cell>
      <Cell c="ml-[15px] w-10">
        <div className="flex size-[30px] flex-col items-center bg-[#1a98ff] pt-0.5 text-[8px] leading-[9px] font-bold text-[#0b1e33]"><p className="flex h-[9px] items-center">prime</p><p className="flex h-[9px] items-center">video</p><Icon box="0 0 20 6" sw={1.500} className="mt-0.5 h-1.5 w-5"><path d="M1 1q8 5.500 16.500 1.500M16 1.200l3-.2-.8 3" /></Icon></div>
      </Cell>
      <Cell c="ml-[15px] w-10"><VscVscode className="size-[30px] text-[#22a0ea]" /></Cell>
      <Cell c="ml-[15px] w-10"><Chrome /></Cell>
      <Cell c="ml-[15px] w-10"><span className="flex size-[30px] items-center justify-center rounded-full bg-[#5865f2]"><FaDiscord className="size-5" /></span></Cell>
      <div className="relative ml-[10px] flex size-[50px] items-center justify-center rounded-md border border-[#3a3a3a] bg-[#2d2d2d]"><OutlookApp /><i className="absolute bottom-0 h-1 w-4 rounded-full bg-[#a9bfa9]" /></div>
      <div className="relative ml-[9px] flex h-[50px] w-10 items-center justify-center"><FaWhatsapp className="size-[33px] text-[#25d366]" /><i className="absolute bottom-0 h-1 w-2 rounded-full bg-[#9a9a9a]" /></div>
      <div className="relative ml-[15px] flex h-[50px] w-10 items-center justify-center">
        <i className="absolute bottom-0 h-1 w-[18px] rounded-full bg-[#9a9a9a]" />
        <svg viewBox="0 0 30 30" className="relative mt-3 size-[30px]"><rect width="22" height="23" rx="2.500" fill="#f0f0f2" /><path d="M4.500 17V4.500H17" fill="none" stroke="#d9420b" strokeWidth="3" strokeDasharray="3 2" /><path d="M17.500 7v13M5 19h14" stroke="#8c9299" strokeWidth="2.600" /><path d="m17 20 5-2M17.500 19l-1 5" stroke="#1c9fe8" strokeWidth="2" /><circle cx="26" cy="17.300" r="2.700" fill="none" stroke="#1c9fe8" strokeWidth="1.700" /><circle cx="16" cy="27" r="2.400" fill="none" stroke="#1c9fe8" strokeWidth="1.700" /></svg>
      </div>
      <div className="ml-auto flex items-center">
        <ChevUp className="mr-[24px] size-[15px]" sw={1.600} />
        <svg viewBox="0 0 20 20" className="mr-[19px] size-5"><path d="M9.500 0Q13 2.500 18.500 2.500V9q0 7-9 10.500Q.500 16 .500 9V2.500Q6 2.500 9.500 0Z" fill="#1689dc" /><path d="M9.500 0v9.500h-9v-7Q6 2.500 9.500 0Z" fill="#4cc8f5" /><circle cx="14" cy="14" r="5.700" fill="#0b8a17" /><path d="m11.500 14 1.800 1.800 3.200-3.300" fill="none" stroke="#fff" strokeWidth="1.300" /></svg>
        <Icon className="mr-2 size-[22px]" sw={1.300}><path d="M1.300 7.800a12.300 12.300 0 0 1 17.400 0M4 10.500a8.500 8.500 0 0 1 12 0M6.500 13.200a5 5 0 0 1 7 0" /><circle cx="10" cy="16" r="1.300" fill="currentColor" stroke="none" /></Icon>
        <Icon className="mr-2 size-[22px]" sw={1.200}><path d="M1.500 7.700v4.600h3.200L9.300 16.500v-13L4.700 7.700ZM11.500 8a3 3 0 0 1 0 4M13.500 6a6 6 0 0 1 0 8" /><path d="M16 4a9.500 9.500 0 0 1 0 12" stroke="#6a6a6a" /></Icon>
        <svg viewBox="0 0 22 14" className="mr-5 h-3.5 w-[21px]"><rect x=".8" y=".8" width="17.500" height="12.400" rx="3" fill="none" stroke="#fff" strokeWidth="1.400" /><rect x="3" y="3" width="13" height="8" rx="1.300" fill="#fff" /><path d="M20.300 4.500v5" stroke="#fff" strokeWidth="1.800" strokeLinecap="round" /></svg>
        <div className="text-right text-[14.500px] leading-5"><p>08:25</p><p>02/09/2024</p></div>
        <svg viewBox="0 0 17 20" className="mr-[25px] ml-[11px] h-5 w-[17px]" fill="#d3e6d3"><path d="M8.500.500A6 6 0 0 0 2.500 6.500v4.800L.600 15.200c-.2.500 0 .8.500.8h14.800c.5 0 .7-.3.5-.8l-1.900-3.900V6.500A6 6 0 0 0 8.500.500ZM5.800 17h5.400a2.700 2.300 0 0 1-5.400 0Z" /></svg>
      </div>
    </footer>
  );
}

export default function App() {
  return (
    <div className="relative flex h-[1195px] w-[1919px] flex-col overflow-hidden bg-[#141414] font-['Open_Sans','Noto_Sans',sans-serif] text-[16.500px]">
      <TitleBar />
      <div className="flex h-[1081px] shrink-0">
        <Rail />
        <main className="flex flex-1 flex-col">
          <MenuTabs />
          <Ribbon />
          <div className="flex flex-1">
            <FolderPane />
            <MessageList />
            <div className="flex flex-1 flex-col pt-2.5">
              <Compose />
              <DraftTabs />
            </div>
          </div>
        </main>
      </div>
      <Taskbar />
      <div className="absolute top-[1076px] right-[26px] flex h-[39px] w-[346px] items-center rounded-[5px] border border-[#479ef5] bg-[#292929] pl-[7px] text-[14.100px] whitespace-nowrap text-[#479ef5]">
        <Bulb className="size-5" sw={1.500} />
        <span className="ml-[5px] tracking-[0.050px]">Bienvenue dans le nouvel Outlook</span>
        <span className="ml-2">(1/5)</span>
        <ChevUp className="mr-2.5 ml-auto size-[17px]" sw={0.900} />
      </div>
    </div>
  );
}
